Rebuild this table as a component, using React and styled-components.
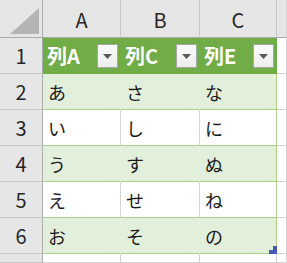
import React from 'react'
import styled, { createGlobalStyle } from 'styled-components'

const GlobalStyle = createGlobalStyle`
  html, body {
    margin: 0;
    padding: 0;
    background: #ffffff;
    overflow: hidden;
  }
`

const Sheet = styled.div`
  display: grid;
  grid-template-columns: 43px 78px 79px 77px 1fr;
  grid-template-rows: 38px repeat(6, 36px) 1fr;
  width: 287px;
  height: 263px;
  font-family: "Noto Sans CJK JP", "Noto Sans", sans-serif;
`

const Corner = styled.div`
  background: #e6e6e6;
  border-right: 1px solid #ababab;
  border-bottom: 1px solid #ababab;
  display: flex;
  align-items: flex-end;
  justify-content: flex-end;
  padding: 0 2px 3px 0;
  box-sizing: border-box;
`

const ColHead = styled.div`
  background: #e6e6e6;
  border-right: 1px solid #c8c8c8;
  border-bottom: 1px solid #ababab;
  box-sizing: border-box;
  display: flex;
  align-items: center;
  justify-content: center;
  font-size: 20px;
  color: #262626;
  padding-top: 1px;
`

const RowHead = styled.div`
  background: #e6e6e6;
  border-right: 1px solid #ababab;
  border-bottom: 1px solid #c8c8c8;
  box-sizing: border-box;
  display: flex;
  align-items: center;
  justify-content: center;
  font-size: 20px;
  color: #262626;
`

const TitleCell = styled.div`
  background: #70ad47;
  border-bottom: 1px solid #70ad47;
  box-sizing: border-box;
  display: flex;
  align-items: center;
  justify-content: space-between;
  padding: 0 3px 0 4px;
  color: #ffffff;
  font-weight: 700;
  font-size: 20px;
`

const FilterButton = styled.div`
  width: 21px;
  height: 24px;
  margin-top: 1px;
  box-sizing: border-box;
  background: linear-gradient(#fbfbfb, #ededed);
  border: 1px solid #a6a6a6;
  display: flex;
  align-items: center;
  justify-content: center;
`

const DataCell = styled.div`
  position: relative;
  background: ${p => (p.$band ? '#e2efda' : '#ffffff')};
  border-right: 1px solid ${p => (p.$last ? '#a9d08e' : p.$band ? '#e2efda' : '#d4d4d4')};
  border-bottom: 1px solid #a9d08e;
  box-sizing: border-box;
  display: flex;
  align-items: center;
  padding: 0 0 0 5px;
  font-size: 18px;
  color: #1a1a1a;
`

const Blank = styled.div`
  background: ${p => (p.$head ? '#e6e6e6' : '#ffffff')};
  border-right: 1px solid #d4d4d4;
  border-bottom: 1px solid ${p => (p.$head ? '#ababab' : '#d4d4d4')};
  box-sizing: border-box;
`

const Handle = styled.svg`
  position: absolute;
  right: -1px;
  bottom: -1px;
`

const columns = ['A', 'B', 'C']
const titles = ['列A', '列C', '列E']
const rows = [
  ['あ', 'さ', 'な'],
  ['い', 'し', 'に'],
  ['う', 'す', 'ぬ'],
  ['え', 'せ', 'ね'],
  ['お', 'そ', 'の'],
]

const App = () => {
  return (
    <>
      <GlobalStyle />
      <Sheet>
        <Corner>
          <svg width="30" height="26" viewBox="0 0 30 26">
            <polygon points="0,26 29,26 29,0" fill="#b4b4b4" />
          </svg>
        </Corner>
        {columns.map(c => (
          <ColHead key={c}>{c}</ColHead>
        ))}
        <Blank $head />

        <RowHead>1</RowHead>
        {titles.map(t => (
          <TitleCell key={t}>
            <span>{t}</span>
            <FilterButton>
              <svg width="9" height="5" viewBox="0 0 9 5">
                <polygon points="0,0 9,0 4.5,5" fill="#5a5a5a" />
              </svg>
            </FilterButton>
          </TitleCell>
        ))}
        <Blank />

        {rows.map((r, i) => (
          <React.Fragment key={i}>
            <RowHead>{i + 2}</RowHead>
            {r.map((v, j) => (
              <DataCell key={j} $band={i % 2 === 0} $last={j === 2}>
                {v}
                {i === rows.length - 1 && j === 2 && (
                  <Handle width="8" height="8" viewBox="0 0 8 8">
                    <polygon points="4,0 8,0 8,8 0,8 0,4 4,4" fill="#4458b8" />
                  </Handle>
                )}
              </DataCell>
            ))}
            <Blank />
          </React.Fragment>
        ))}

        <RowHead />
        <Blank />
        <Blank />
        <Blank />
        <Blank />
      </Sheet>
    </>
  )
}

export default App
